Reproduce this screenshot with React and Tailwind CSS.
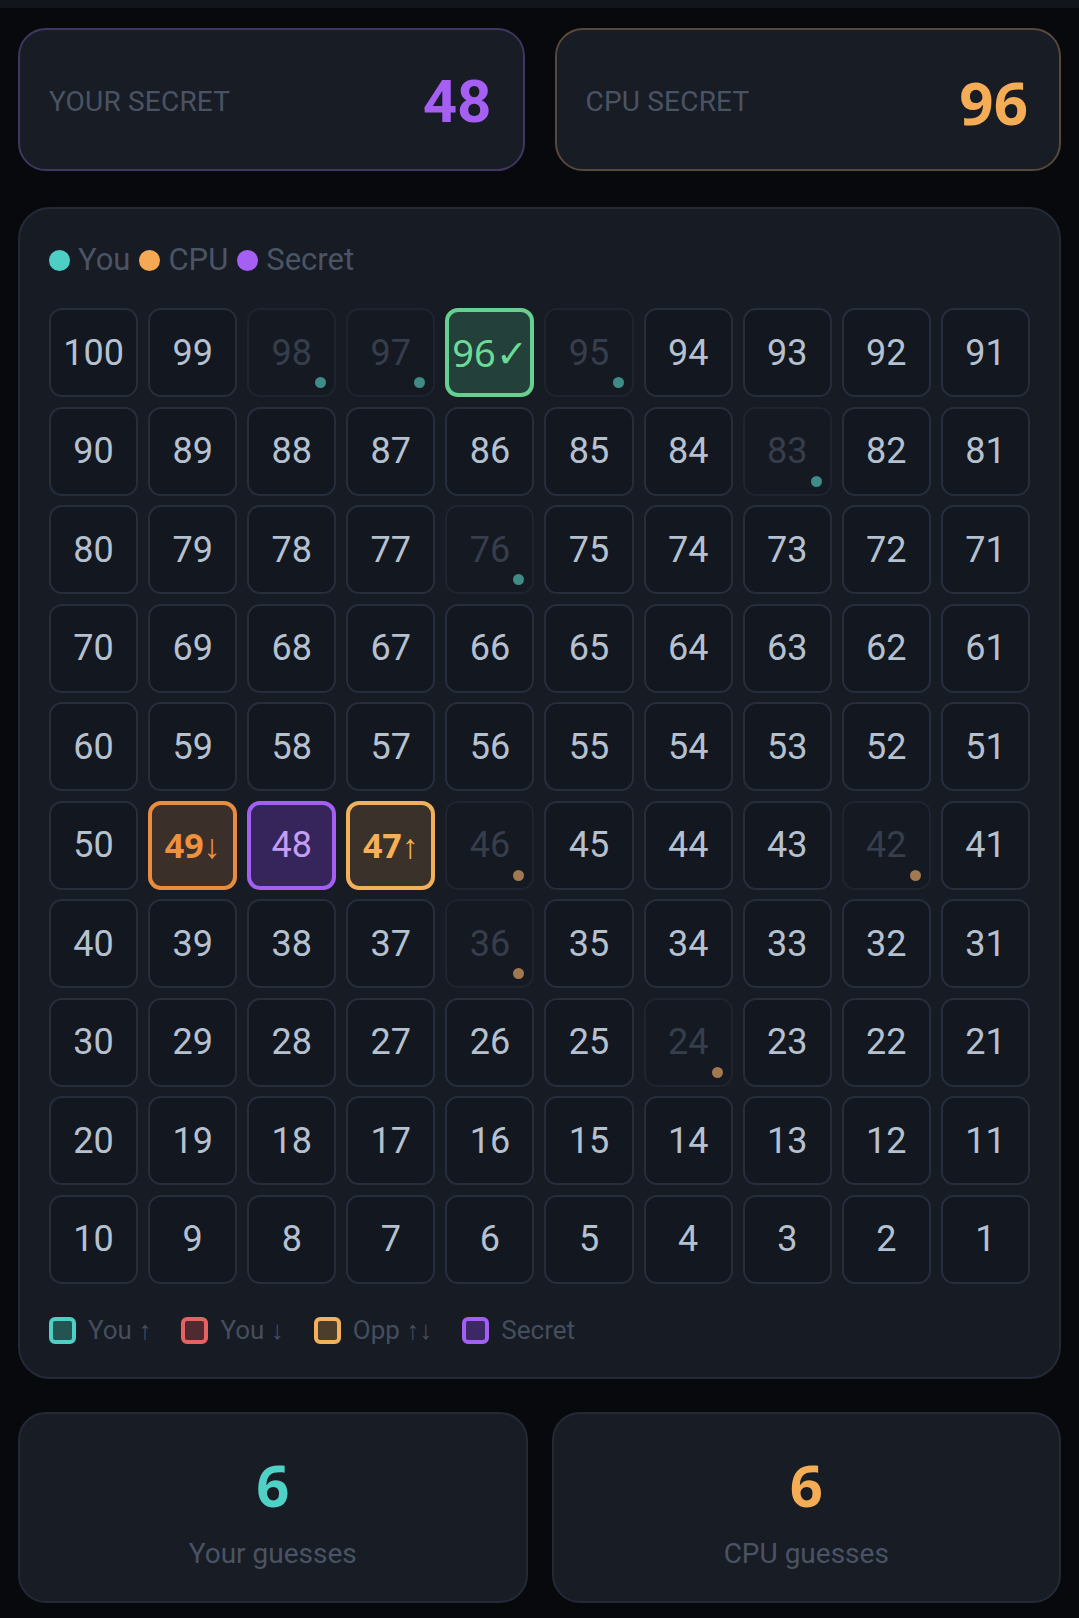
import React from 'react';

const youGuesses = [98, 97, 95, 83, 76];
const cpuGuesses = [46, 42, 36, 24];

// special cells: CPU secret found, cpu hints, your secret
const special = {
    96: { label: '96✓', cls: 'border-[4px] border-[#66d08f] bg-[#23403a] text-[#6cdb97] font-["Noto_Sans"] text-[38px]' },
    49: { label: '49↓', cls: 'border-[4px] border-[#e98c3d] bg-[#3a2f29] text-[#ef913c] font-bold font-["Noto_Sans"] text-[34px]' },
    48: { label: '48', cls: 'border-[4px] border-[#a35ef2] bg-[#35255a] text-[#c39ef2] text-[36px]' },
    47: { label: '47↑', cls: 'border-[4px] border-[#f3b05a] bg-[#3a312a] text-[#f5b153] font-bold font-["Noto_Sans"] text-[34px]' },
};

const Cell = ({ n }) => {
    if (special[n]) {
        const s = special[n];
        return (
            <div className={`h-[89px] rounded-[13px] flex items-center justify-center ${s.cls}`}>
                {s.label}
            </div>
        );
    }
    const you = youGuesses.includes(n);
    const cpu = cpuGuesses.includes(n);
    if (you || cpu) {
        return (
            <div className="relative h-[89px] rounded-[13px] border-2 border-[#1e2430] bg-[#151922] flex items-center justify-center text-[36px] text-[#363e4c]">
                {n}
                <span className={`absolute right-[8px] bottom-[7px] size-[11px] rounded-full ${you ? 'bg-[#3f8c86]' : 'bg-[#a27850]'}`} />
            </div>
        );
    }
    return (
        <div className="h-[89px] rounded-[13px] border-2 border-[#262e3c] bg-[#131720] flex items-center justify-center text-[36px] text-[#b6c1d0]">
            {n}
        </div>
    );
};

const LegendBox = ({ border, bg, label }) => (
    <div className="flex items-center gap-[12px]">
        <span className={`size-[27px] rounded-[6px] border-[4px] ${border} ${bg}`} />
        <span>{label}</span>
    </div>
);

export default function App() {
    const numbers = Array.from({ length: 100 }, (_, i) => 100 - i);

    return (
        <div className="min-h-[1618px] bg-[#07090c] font-['Roboto',sans-serif]">
            {/* status strip */}
            <div className="h-[8px] bg-[#11151c]" />

            <div className="px-[18px] pt-[20px] pb-[18px]">
                {/* Secrets */}
                <div className="flex gap-[30px]">
                    <div className="flex-1 h-[143px] rounded-[28px] border-2 border-[#413561] bg-[#181c25] flex items-center justify-between pl-[29px] pr-[31px] pt-[4px]">
                        <span className="text-[28px] text-[#4a5363] tracking-[0.2px]">YOUR SECRET</span>
                        <span className="text-[60px] font-bold text-[#a65ff3] leading-none">48</span>
                    </div>
                    <div className="flex-1 h-[143px] rounded-[28px] border-2 border-[#56483a] bg-[#181c25] flex items-center justify-between pl-[29px] pr-[31px] pt-[4px]">
                        <span className="text-[28px] text-[#4a5363] tracking-[0.2px]">CPU SECRET</span>
                        <span className="text-[60px] font-bold text-[#f5ad55] leading-none font-['Noto_Sans']">96</span>
                    </div>
                </div>

                {/* Board */}
                <div className="mt-[36px] rounded-[32px] border-2 border-[#232a36] bg-[#171b24] px-[29px] pt-[29px] pb-[27px]">
                    <div className="h-[44px] flex items-center text-[31px] text-[#4b5464] mb-[26px]">
                        <span className="size-[21px] rounded-full bg-[#4ecfc5] mr-[8px]" />
                        <span className="mr-[9px]">You</span>
                        <span className="size-[21px] rounded-full bg-[#f5a954] mr-[8px]" />
                        <span className="mr-[9px]">CPU</span>
                        <span className="size-[21px] rounded-full bg-[#a65ff3] mr-[8px]" />
                        <span>Secret</span>
                    </div>

                    <div className="grid grid-cols-10 gap-x-[10px] gap-y-[9.5px]">
                        {numbers.map((n) => (
                            <Cell key={n} n={n} />
                        ))}
                    </div>

                    <div className="mt-[27px] flex items-center gap-[30px] text-[26px] text-[#454e5d]">
                        <LegendBox border="border-[#4ecfc5]" bg="bg-[#245452]" label="You ↑" />
                        <LegendBox border="border-[#e4625f]" bg="bg-[#4d2b31]" label="You ↓" />
                        <LegendBox border="border-[#f3b05a]" bg="bg-[#4d3d2b]" label="Opp ↑↓" />
                        <LegendBox border="border-[#a35ef2]" bg="bg-[#3c2865]" label="Secret" />
                    </div>
                </div>

                {/* Guess counters */}
                <div className="mt-[33px] flex gap-[24px]">
                    <div className="flex-1 h-[191px] rounded-[28px] border-2 border-[#232a36] bg-[#181c25] flex flex-col items-center justify-center pt-[10px]">
                        <span className="text-[58px] font-bold text-[#4fd1c5] leading-none font-['Noto_Sans']">6</span>
                        <span className="mt-[26px] text-[28px] text-[#4a5363] leading-none">Your guesses</span>
                    </div>
                    <div className="flex-1 h-[191px] rounded-[28px] border-2 border-[#232a36] bg-[#181c25] flex flex-col items-center justify-center pt-[10px]">
                        <span className="text-[58px] font-bold text-[#f5ad55] leading-none font-['Noto_Sans']">6</span>
                        <span className="mt-[26px] text-[28px] text-[#4a5363] leading-none">CPU guesses</span>
                    </div>
                </div>
            </div>
        </div>
    );
}
